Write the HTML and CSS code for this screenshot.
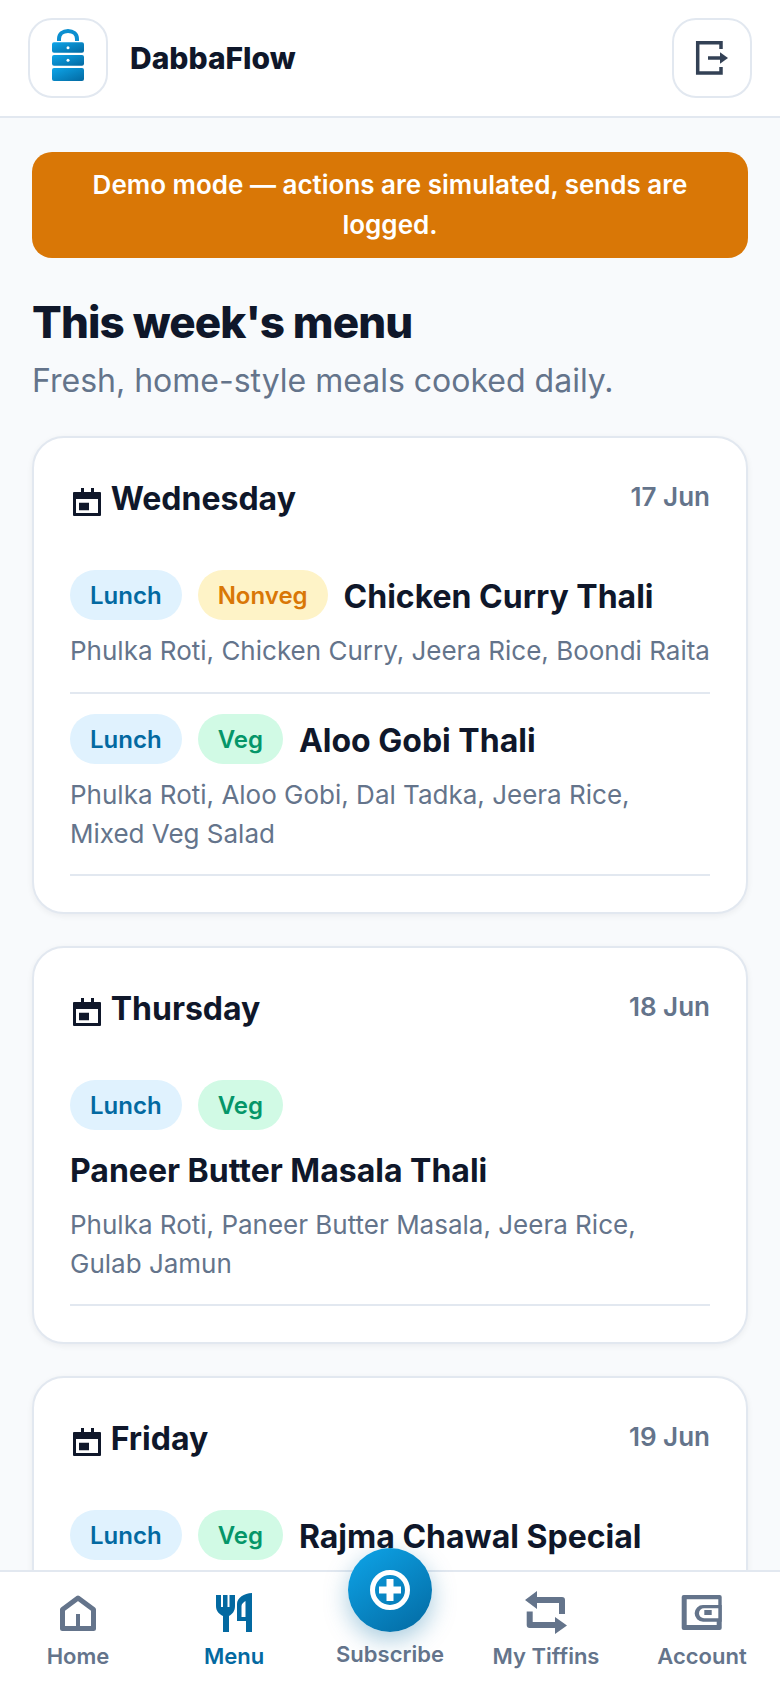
FILE: index.html
```html
<!DOCTYPE html>
<html lang="en">
<head>
<meta charset="utf-8">
<title>DabbaFlow</title>
<link rel="stylesheet" href="styles.css">
</head>
<body>
<div class="app">
  <header class="topbar">
    <div class="brand">
      <div class="iconbox">
        <svg width="34" height="60" viewBox="0 0 34 60">
          <defs>
            <linearGradient id="lg" x1="0" y1="0" x2="1" y2="1"><stop offset="0" stop-color="#0ea5e9"/><stop offset="1" stop-color="#0369a1"/></linearGradient>
          </defs>
          <path d="M8 13v-2C8 6 12 3 17 3s9 3 9 8v2" fill="none" stroke="#0b8fd0" stroke-width="4"/>
          <rect x="1" y="14.300" width="32" height="10.400" rx="2" fill="url(#lg)"/>
          <rect x="1" y="27" width="32" height="10.700" rx="2" fill="url(#lg)"/>
          <rect x="1" y="40" width="32" height="13" rx="2" fill="url(#lg)"/>
          <circle cx="17" cy="19.700" r="1.500" fill="#fff"/>
          <circle cx="17" cy="32.300" r="1.500" fill="#fff"/>
        </svg>
      </div>
      <span class="brand-name">DabbaFlow</span>
    </div>
    <button class="iconbox" aria-label="Log out">
      <svg width="34" height="36" viewBox="0 0 34 36">
        <path d="M26 9V2.700H2.700V33H26v-6" fill="none" stroke="#334155" stroke-width="3.500"/>
        <path d="M13 18h13" stroke="#334155" stroke-width="3.500"/>
        <path d="M25 12.200L33 18l-8 5.800z" fill="#334155"/>
      </svg>
    </button>
  </header>

  <main class="content">
    <div class="banner">Demo mode — actions are simulated, sends are logged.</div>
    <h1 class="title">This week's menu</h1>
    <p class="subtitle">Fresh, home-style meals cooked daily.</p>

    <section class="card">
      <div class="day-head">
        <h2 class="day"><svg class="cal" viewBox="0 0 28 28"><path fill="currentColor" fill-rule="evenodd" d="M8 0h3v4h7V0h3v4h6a1 1 0 0 1 1 1v22a1 1 0 0 1-1 1H1a1 1 0 0 1-1-1V5a1 1 0 0 1 1-1h7zM3 11v14h22V11zM6 14.700h10v7.600H6z"/></svg>Wednesday</h2>
        <span class="date">17 Jun</span>
      </div>
      <div class="meal">
        <div class="meal-top">
          <span class="pill lunch">Lunch</span><span class="pill nonveg">Nonveg</span>
          <span class="meal-name">Chicken Curry Thali</span>
        </div>
        <p class="desc">Phulka Roti, Chicken Curry, Jeera Rice, Boondi Raita</p>
      </div>
      <div class="meal">
        <div class="meal-top">
          <span class="pill lunch">Lunch</span><span class="pill veg">Veg</span>
          <span class="meal-name">Aloo Gobi Thali</span>
        </div>
        <p class="desc">Phulka Roti, Aloo Gobi, Dal Tadka, Jeera Rice, Mixed Veg Salad</p>
      </div>
    </section>

    <section class="card">
      <div class="day-head">
        <h2 class="day"><svg class="cal" viewBox="0 0 28 28"><path fill="currentColor" fill-rule="evenodd" d="M8 0h3v4h7V0h3v4h6a1 1 0 0 1 1 1v22a1 1 0 0 1-1 1H1a1 1 0 0 1-1-1V5a1 1 0 0 1 1-1h7zM3 11v14h22V11zM6 14.700h10v7.600H6z"/></svg>Thursday</h2>
        <span class="date">18 Jun</span>
      </div>
      <div class="meal">
        <div class="meal-top">
          <span class="pill lunch">Lunch</span><span class="pill veg">Veg</span>
          <span class="meal-name">Paneer Butter Masala Thali</span>
        </div>
        <p class="desc">Phulka Roti, Paneer Butter Masala, Jeera Rice, Gulab Jamun</p>
      </div>
    </section>

    <section class="card">
      <div class="day-head">
        <h2 class="day"><svg class="cal" viewBox="0 0 28 28"><path fill="currentColor" fill-rule="evenodd" d="M8 0h3v4h7V0h3v4h6a1 1 0 0 1 1 1v22a1 1 0 0 1-1 1H1a1 1 0 0 1-1-1V5a1 1 0 0 1 1-1h7zM3 11v14h22V11zM6 14.700h10v7.600H6z"/></svg>Friday</h2>
        <span class="date">19 Jun</span>
      </div>
      <div class="meal">
        <div class="meal-top">
          <span class="pill lunch">Lunch</span><span class="pill veg">Veg</span>
          <span class="meal-name">Rajma Chawal Special</span>
        </div>
        <p class="desc">Phulka Roti, Rajma, Jeera Rice, Onion Salad</p>
      </div>
    </section>
  </main>

  <nav class="tabbar">
    <a class="tab">
      <svg width="44" height="44" viewBox="0 0 44 44"><path d="M22 8L37.500 19.500V38.500H6.500V19.500Z" fill="none" stroke="currentColor" stroke-width="5" stroke-linejoin="round"/><path d="M20 24h4v14h-4z" fill="currentColor"/></svg>
      <span>Home</span>
    </a>
    <a class="tab active">
      <svg width="44" height="44" viewBox="0 0 44 44"><path fill="currentColor" fill-rule="evenodd" d="M4 5h5v12h2V5h4.500v12h2V5H23v11c0 5-2.500 8-6 10v16h-6V26C7 24 4 21 4 16zM40 3v39h-6V31h-9V14C25 8 32 3 40 3zM33.500 11c-2 1-4 3-4 5v11h4z"/></svg>
      <span>Menu</span>
    </a>
    <a class="tab subscribe">
      <span class="fab">
        <svg width="40" height="40" viewBox="0 0 40 40"><circle cx="20" cy="20" r="17.500" fill="none" stroke="#fff" stroke-width="5"/><path d="M20 9v22M9 20h22" stroke="#fff" stroke-width="7"/></svg>
      </span>
      <span>Subscribe</span>
    </a>
    <a class="tab">
      <svg width="44" height="44" viewBox="0 0 44 44"><path d="M12 10h26v14M32 35H5.700V21.600" fill="none" stroke="currentColor" stroke-width="6" stroke-linejoin="round"/><path d="M13 1v18L1 10zM31 27v17l12-8.500z" fill="currentColor"/></svg>
      <span>My Tiffins</span>
    </a>
    <a class="tab">
      <svg width="44" height="44" viewBox="0 0 44 44"><rect x="1.700" y="5" width="40" height="35" rx="2" fill="currentColor"/><path d="M6.700 9.300h31.600V15H36.700V35H6.700z" fill="#fff"/><path d="M23 15H41.700V31.700H23a8.350 8.350 0 0 1 0-16.700z" fill="currentColor"/><path d="M24 18.300H38.300V28.300H24a5 5 0 0 1 0-10z" fill="#fff"/><path d="M24.300 20h7.400v5h-7.400z" fill="currentColor"/></svg>
      <span>Account</span>
    </a>
  </nav>
</div>
</body>
</html>
```
FILE: styles.css
```css
* { box-sizing: border-box; }
html, body { margin: 0; height: 100%; }
body {
  font-family: Inter, "Liberation Sans", sans-serif;
  color: #0f172a;
  background: #f8fafc;
  overflow: hidden;
}
.app {
  height: 1688px;
  display: flex;
  flex-direction: column;
  position: relative;
  overflow: hidden;
}

.topbar {
  flex: none;
  height: 118px;
  padding: 18px 28px;
  display: flex;
  align-items: flex-start;
  justify-content: space-between;
  background: #fff;
  border-bottom: 2px solid #e2e8f0;
}
.brand { display: flex; align-items: center; gap: 22px; }
.brand-name { font-size: 30px; font-weight: 800; }
.iconbox {
  width: 80px;
  height: 80px;
  padding: 0;
  display: flex;
  align-items: center;
  justify-content: center;
  background: #fff;
  border: 2px solid #e2e8f0;
  border-radius: 24px;
}

.content { flex: 1; min-height: 0; overflow: hidden; padding: 34px 32px 0; }
.banner {
  padding: 13px 32px;
  background: #d97706;
  color: #fff;
  border-radius: 20px;
  font-size: 26px;
  font-weight: 600;
  line-height: 40px;
  text-align: center;
}
.title {
  margin: 36px 0 0;
  font-size: 44px;
  line-height: 56px;
  font-weight: 800;
  letter-spacing: -0.88px;
}
.subtitle {
  margin: 9px 0 0;
  padding-bottom: 1px;
  font-size: 32px;
  line-height: 44px;
  color: #64748b;
}

.card {
  margin-top: 32px;
  padding: 39px 36px 36px;
  background: #fff;
  border: 2px solid #e2e8f0;
  border-radius: 32px;
  box-shadow: 0 2px 6px rgba(15, 23, 42, 0.06);
}
.day-head { display: flex; justify-content: space-between; align-items: flex-start; margin-bottom: 49px; }
.day {
  margin: 0;
  display: flex;
  align-items: center;
  gap: 10px;
  font-size: 32px;
  line-height: 44px;
  font-weight: 700;
}
.cal { width: 28px; height: 28px; margin: 6px 0 0 2.7px; color: #0f172a; }
.date { font-size: 26px; font-weight: 600; line-height: 40px; color: #64748b; }

.meal { padding-bottom: 22px; margin-bottom: 20px; border-bottom: 2px solid #e2e8f0; }
.meal:last-child { padding-bottom: 21px; margin-bottom: 0; }
.meal-top { display: flex; flex-wrap: wrap; align-items: flex-end; gap: 18px 16px; }
.pill {
  height: 50px;
  padding: 0 20px;
  display: inline-flex;
  align-items: center;
  border-radius: 25px;
  font-size: 24px;
  font-weight: 600;
}
.lunch { background: #e0f2fe; color: #0369a1; }
.nonveg { background: #fef3c7; color: #d97706; }
.veg { background: #d1fae5; color: #059669; }
.meal-name { font-size: 32px; font-weight: 700; line-height: 46px; }
.desc { margin: 11px 0 0; font-size: 26px; line-height: 39px; color: #64748b; }

.tabbar {
  position: absolute;
  left: 0;
  right: 0;
  bottom: 0;
  height: 118px;
  display: grid;
  grid-template-columns: repeat(5, 1fr);
  background: #fff;
  border-top: 2px solid #e2e8f0;
}
.tab {
  display: flex;
  flex-direction: column;
  align-items: center;
  padding-top: 18px;
  gap: 7px;
  color: #64748b;
  font-size: 22px;
  line-height: 30px;
  font-weight: 600;
}
.tab.active { color: #0369a1; }
.tab.subscribe { padding-top: 67px; }
.fab {
  position: absolute;
  top: -24px;
  width: 84px;
  height: 84px;
  display: flex;
  align-items: center;
  justify-content: center;
  border-radius: 50%;
  background: linear-gradient(145deg, #0ea5e9, #0369a1);
  box-shadow: 0 8px 24px rgba(3, 105, 161, 0.35);
}
```
